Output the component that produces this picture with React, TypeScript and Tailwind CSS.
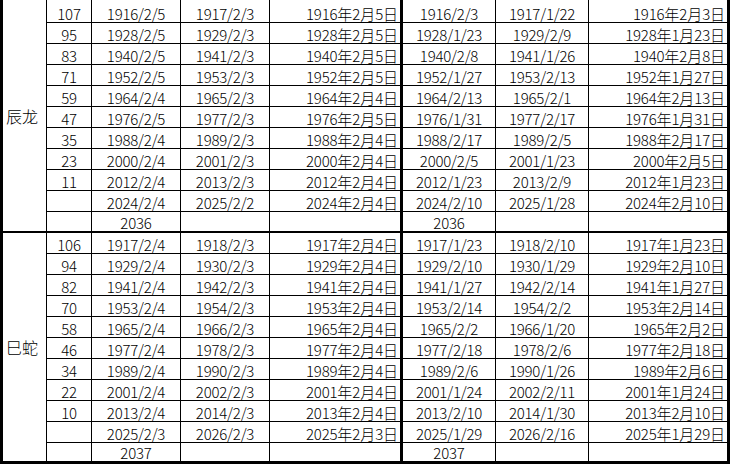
import React from "react";

type Row = string[];

// columns: 岁数 | 立春 | 次年立春 | 立春(中文) | 春节 | 次年春节 | 春节(中文)
const dragon: Row[] = [
  ["107", "1916/2/5", "1917/2/3", "1916/2/5", "1916/2/3", "1917/1/22", "1916/2/3"],
  ["95", "1928/2/5", "1929/2/3", "1928/2/5", "1928/1/23", "1929/2/9", "1928/1/23"],
  ["83", "1940/2/5", "1941/2/3", "1940/2/5", "1940/2/8", "1941/1/26", "1940/2/8"],
  ["71", "1952/2/5", "1953/2/3", "1952/2/5", "1952/1/27", "1953/2/13", "1952/1/27"],
  ["59", "1964/2/4", "1965/2/3", "1964/2/4", "1964/2/13", "1965/2/1", "1964/2/13"],
  ["47", "1976/2/5", "1977/2/3", "1976/2/5", "1976/1/31", "1977/2/17", "1976/1/31"],
  ["35", "1988/2/4", "1989/2/3", "1988/2/4", "1988/2/17", "1989/2/5", "1988/2/17"],
  ["23", "2000/2/4", "2001/2/3", "2000/2/4", "2000/2/5", "2001/1/23", "2000/2/5"],
  ["11", "2012/2/4", "2013/2/3", "2012/2/4", "2012/1/23", "2013/2/9", "2012/1/23"],
  ["", "2024/2/4", "2025/2/2", "2024/2/4", "2024/2/10", "2025/1/28", "2024/2/10"],
  ["", "2036", "", "", "2036", "", ""],
];

const snake: Row[] = [
  ["106", "1917/2/4", "1918/2/3", "1917/2/4", "1917/1/23", "1918/2/10", "1917/1/23"],
  ["94", "1929/2/4", "1930/2/3", "1929/2/4", "1929/2/10", "1930/1/29", "1929/2/10"],
  ["82", "1941/2/4", "1942/2/3", "1941/2/4", "1941/1/27", "1942/2/14", "1941/1/27"],
  ["70", "1953/2/4", "1954/2/3", "1953/2/4", "1953/2/14", "1954/2/2", "1953/2/14"],
  ["58", "1965/2/4", "1966/2/3", "1965/2/4", "1965/2/2", "1966/1/20", "1965/2/2"],
  ["46", "1977/2/4", "1978/2/3", "1977/2/4", "1977/2/18", "1978/2/6", "1977/2/18"],
  ["34", "1989/2/4", "1990/2/3", "1989/2/4", "1989/2/6", "1990/1/26", "1989/2/6"],
  ["22", "2001/2/4", "2002/2/3", "2001/2/4", "2001/1/24", "2002/2/11", "2001/1/24"],
  ["10", "2013/2/4", "2014/2/3", "2013/2/4", "2013/2/10", "2014/1/30", "2013/2/10"],
  ["", "2025/2/3", "2026/2/3", "2025/2/3", "2025/1/29", "2026/2/16", "2025/1/29"],
  ["", "2037", "", "", "2037", "", ""],
];

const CnDate = ({ v }: { v: string }) => {
  if (!v) return null;
  const [y, m, d] = v.split("/");
  return (
    <>
      {y}
      <span className="tracking-normal">年</span>
      {m}
      <span className="tracking-normal">月</span>
      {d}
      <span className="tracking-normal">日</span>
    </>
  );
};

const cell = "flex items-end h-full whitespace-nowrap leading-[16px] border-black";

const DataRow = ({ r, h, last }: { r: Row; h: string; last: boolean }) => (
  <div className={`flex ${h} ${last ? "" : "border-b border-black"}`}>
    <div className={`${cell} w-[45px] border-r justify-center`}>{r[0]}</div>
    <div className={`${cell} w-[89px] border-r justify-center`}>{r[1]}</div>
    <div className={`${cell} w-[89px] border-r justify-center`}>{r[2]}</div>
    <div className={`${cell} w-[133px] border-r-[3px] justify-end pr-[2px]`}>
      <CnDate v={r[3]} />
    </div>
    <div className={`${cell} w-[93px] border-r justify-center`}>{r[4]}</div>
    <div className={`${cell} w-[93px] border-r justify-center`}>{r[5]}</div>
    <div className={`${cell} flex-1 justify-end pr-[2px]`}>
      <CnDate v={r[6]} />
    </div>
  </div>
);

const Group = ({
  label,
  rows,
  heights,
  bottom,
}: {
  label: string;
  rows: Row[];
  heights: string[];
  bottom: string;
}) => (
  <div className={`flex border-black ${bottom}`}>
    <div className="w-[44px] shrink-0 border-r border-black flex items-center pl-[3px] text-[16px] tracking-normal">
      {label}
    </div>
    <div className="flex-1 flex flex-col">
      {rows.map((r, i) => (
        <DataRow key={i} r={r} h={heights[i]} last={i === rows.length - 1} />
      ))}
    </div>
  </div>
);

export default function App() {
  const h1 = ["h-[23px]", ...Array(9).fill("h-[21px]"), "h-[19px]"];
  const h2 = [...Array(10).fill("h-[21px]"), "h-[18px]"];
  return (
    <div className="w-[730px] h-[464px] overflow-hidden bg-white text-black border-x-[3px] border-black font-['Noto_Sans_CJK_SC',sans-serif] font-light text-[15px] tracking-[-0.2px]">
      <Group label="辰龙" rows={dragon} heights={h1} bottom="border-b-2" />
      <Group label="巳蛇" rows={snake} heights={h2} bottom="border-b-[3px]" />
    </div>
  );
}
